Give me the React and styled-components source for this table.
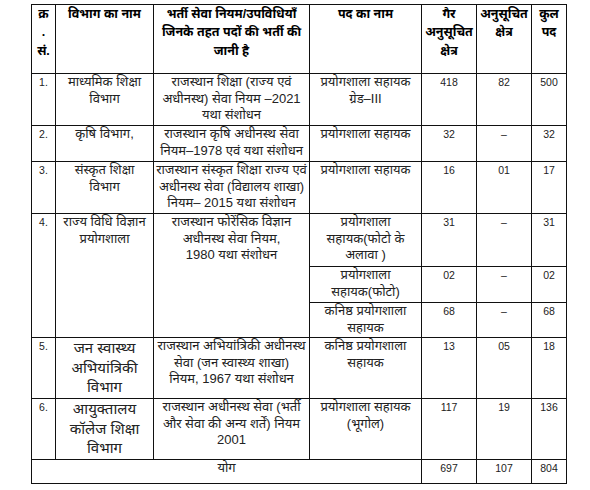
import styled, { createGlobalStyle } from "styled-components";

const GlobalStyle = createGlobalStyle`
  html, body {
    margin: 0;
    padding: 0;
    background: #fff;
  }
  body {
    font-family: "Liberation Sans", "Noto Sans", sans-serif;
    color: #222;
  }
`;

const Page = styled.div`
  width: 590px;
  height: 490px;
  padding: 4px 0 0 31px;
  box-sizing: border-box;
`;

const Table = styled.table`
  width: 535px;
  table-layout: fixed;
  border-collapse: collapse;
  border: 1.5px solid #111;
`;

const Col = styled.col`
  width: ${p => p.w}px;
`;

const Head = styled.th`
  border: 1px solid #111;
  padding: 0;
  vertical-align: top;
  text-align: center;
  font-weight: bold;
  font-size: 12.5px;
  color: #000;
  height: ${p => p.h || 0}px;
  --lh: 18.3px;
`;

const Cell = styled.td`
  border: 1px solid #111;
  padding: 0;
  vertical-align: top;
  text-align: center;
  font-size: ${p => (p.big ? 15 : 13)}px;
  --lh: ${p => (p.big ? 19.5 : 16.7)}px;
  height: ${p => p.h || 0}px;
  overflow: hidden;
`;

const Num = styled(Cell)`
  font-size: 10.5px;
  --lh: 16.7px;
`;

const Line = styled.span`
  display: block;
  height: var(--lh);
  line-height: var(--lh);
  white-space: nowrap;
  overflow: visible;
`;

const lines = text =>
  text.split("\n").map((t, i) => <Line key={i}>{t}</Line>);

const rows = [
  {
    no: "1.",
    dept: "माध्यमिक शिक्षा\nविभाग",
    rule: "राजस्थान शिक्षा (राज्य एवं\nअधीनस्थ) सेवा नियम –2021\nयथा संशोधन",
    posts: [["प्रयोगशाला सहायक\nग्रेड–III", "418", "82", "500", 51]],
  },
  {
    no: "2.",
    dept: "कृषि विभाग,",
    rule: "राजस्थान कृषि अधीनस्थ सेवा\nनियम–1978 एवं यथा संशोधन",
    posts: [["प्रयोगशाला सहायक", "32", "–", "32", 35]],
  },
  {
    no: "3.",
    dept: "संस्कृत शिक्षा\nविभाग",
    rule: "राजस्थान संस्कृत शिक्षा राज्य एवं\nअधीनस्थ सेवा (विद्यालय शाखा)\nनियम– 2015 यथा संशोधन",
    posts: [["प्रयोगशाला सहायक", "16", "01", "17", 51]],
  },
  {
    no: "4.",
    dept: "राज्य विधि विज्ञान\nप्रयोगशाला",
    rule: "राजस्थान फोरेंसिक विज्ञान\nअधीनस्थ सेवा नियम,\n1980 यथा संशोधन",
    posts: [
      ["प्रयोगशाला\nसहायक(फोटो के\nअलावा )", "31", "–", "31", 52],
      ["प्रयोगशाला\nसहायक(फोटो)", "02", "–", "02", 35],
      ["कनिष्ठ प्रयोगशाला\nसहायक", "68", "–", "68", 34],
    ],
  },
  {
    no: "5.",
    dept: "जन स्वास्थ्य\nअभियांत्रिकी\nविभाग",
    big: true,
    rule: "राजस्थान अभियांत्रिकी अधीनस्थ\nसेवा (जन स्वास्थ्य शाखा)\nनियम, 1967 यथा संशोधन",
    posts: [["कनिष्ठ प्रयोगशाला\nसहायक", "13", "05", "18", 60]],
  },
  {
    no: "6.",
    dept: "आयुक्तालय\nकॉलेज शिक्षा\nविभाग",
    big: true,
    rule: "राजस्थान अधीनस्थ सेवा (भर्ती\nऔर सेवा की अन्य शर्तें) नियम\n2001",
    posts: [["प्रयोगशाला सहायक\n(भूगोल)", "117", "19", "136", 60]],
  },
];

export default function App() {
  return (
    <>
      <GlobalStyle />
      <Page>
        <Table>
          <colgroup>
            <Col w={24} />
            <Col w={98} />
            <Col w={156} />
            <Col w={112} />
            <Col w={55} />
            <Col w={55} />
            <Col w={35} />
          </colgroup>
          <thead>
            <tr>
              <Head h={68}>{lines("क्र\n.\nसं.")}</Head>
              <Head>{lines("विभाग का नाम")}</Head>
              <Head>{lines("भर्ती सेवा नियम/उपविधियॉं\nजिनके तहत पदों की भर्ती की\nजानी है")}</Head>
              <Head>{lines("पद का नाम")}</Head>
              <Head>{lines("गैर\nअनुसूचित\nक्षेत्र")}</Head>
              <Head>{lines("अनुसूचित\nक्षेत्र")}</Head>
              <Head>{lines("कुल\nपद")}</Head>
            </tr>
          </thead>
          <tbody>
            {rows.map(r =>
              r.posts.map(([post, a, b, c, h], i) => (
                <tr key={r.no + i}>
                  {i === 0 && (
                    <>
                      <Num rowSpan={r.posts.length}>{lines(r.no)}</Num>
                      <Cell rowSpan={r.posts.length} big={r.big}>
                        {lines(r.dept)}
                      </Cell>
                      <Cell rowSpan={r.posts.length}>{lines(r.rule)}</Cell>
                    </>
                  )}
                  <Cell h={h}>{lines(post)}</Cell>
                  <Num>{lines(a)}</Num>
                  <Num>{lines(b)}</Num>
                  <Num>{lines(c)}</Num>
                </tr>
              ))
            )}
            <tr>
              <Cell colSpan={4} h={23}>{lines("योग")}</Cell>
              <Num>{lines("697")}</Num>
              <Num>{lines("107")}</Num>
              <Num>{lines("804")}</Num>
            </tr>
          </tbody>
        </Table>
      </Page>
    </>
  );
}
